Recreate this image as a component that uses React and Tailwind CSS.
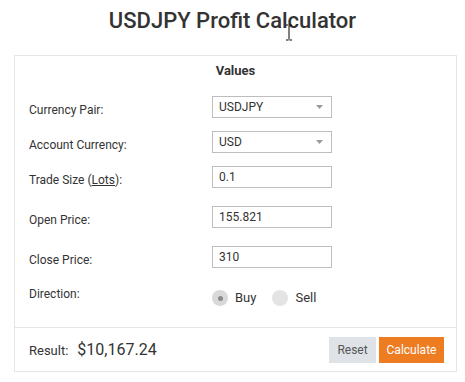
import React from "react";

const font = { fontFamily: "Roboto, 'Liberation Sans', Arial, sans-serif" };

function Arrow() {
  return (
    <svg width="7" height="4" viewBox="0 0 7 4" className="block">
      <path d="M0 0 L7 0 L3.5 4 Z" fill="#9a9a9a" />
    </svg>
  );
}

function SelectBox({ value }) {
  return (
    <div className="w-[120px] h-[22px] border border-[#bdbdbd] bg-white flex items-center justify-between pl-[6px] pr-[8px]">
      <span className="text-[12px] text-[#333] leading-none">{value}</span>
      <Arrow />
    </div>
  );
}

function InputBox({ value }) {
  return (
    <div className="w-[120px] h-[22px] border border-[#bdbdbd] bg-white flex items-center pl-[6px]">
      <span className="text-[12px] text-[#333] leading-none">{value}</span>
    </div>
  );
}

export default function App() {
  return (
    <div className="relative w-[465px] h-[382px] bg-white" style={font}>
      <div className="pt-[7px] text-center text-[22px] leading-[28px] font-medium text-[#333]">
        USDJPY Profit Calculator
      </div>
      <div className="mt-[20px] ml-[14px] w-[443px] border border-[#e3e6ea]">
        <div className="pl-[14px] pb-[21px]">
          <div className="pt-[7px] text-center text-[13px] leading-[16px] font-bold text-[#333] -ml-[14px]">Values</div>
          <div className="flex items-start mt-[17px]">
            <div className="w-[183px] text-[12px] text-[#333] leading-[22px] pt-[3px] h-[22px]">Currency Pair:</div>
            <SelectBox value="USDJPY" />
          </div>
          <div className="flex items-start mt-[13px]">
            <div className="w-[183px] text-[12px] text-[#333] leading-[22px] pt-[3px] h-[22px]">Account Currency:</div>
            <SelectBox value="USD" />
          </div>
          <div className="flex items-start mt-[13px]">
            <div className="w-[183px] text-[12px] text-[#333] leading-[22px] pt-[3px] h-[22px]">
              Trade Size (<span className="underline">Lots</span>):
            </div>
            <InputBox value="0.1" />
          </div>
          <div className="flex items-start mt-[18px]">
            <div className="w-[183px] text-[12px] text-[#333] leading-[22px] pt-[3px] h-[22px]">Open Price:</div>
            <InputBox value="155.821" />
          </div>
          <div className="flex items-start mt-[18px]">
            <div className="w-[183px] text-[12px] text-[#333] leading-[22px] pt-[3px] h-[22px]">Close Price:</div>
            <InputBox value="310" />
          </div>
          <div className="flex items-start mt-[20px]">
            <div className="w-[183px] text-[12px] text-[#333] leading-[12px]">Direction:</div>
            <div className="mt-[2px] flex items-center h-[16px]">
              <div className="w-[16px] h-[16px] rounded-full bg-[#d9d9d9] flex items-center justify-center">
                <div className="w-[5px] h-[5px] rounded-full bg-[#8a8a8a]" />
              </div>
              <span className="ml-[7px] text-[13px] text-[#333]">Buy</span>
              <div className="ml-[16px] w-[16px] h-[16px] rounded-full bg-[#e4e4e4]" />
              <span className="ml-[7px] text-[13px] text-[#333]">Sell</span>
            </div>
          </div>
        </div>
        <div className="border-t border-[#e3e6ea] flex items-center justify-between pl-[14px] pr-[12px] pt-[9px] pb-[8px]">
          <div className="flex items-baseline text-[#333]">
            <span className="text-[13px]">Result:</span>
            <span className="ml-[9px] text-[16px]">$10,167.24</span>
          </div>
          <div className="flex gap-[3px]">
            <button className="w-[47px] h-[26px] bg-[#dfe3e8] text-[12px] text-[#555]">Reset</button>
            <button className="w-[65px] h-[26px] bg-[#ee7d22] text-[12px] text-white">Calculate</button>
          </div>
        </div>
      </div>
      <svg className="absolute left-[285px] top-[24px]" width="8" height="17" viewBox="0 0 8 17">
        <path d="M1 1 H3.5 M4.5 1 H7 M4 1.5 V15.5 M1 16 H3.5 M4.5 16 H7" stroke="#000" strokeWidth="1" fill="none" />
      </svg>
    </div>
  );
}
